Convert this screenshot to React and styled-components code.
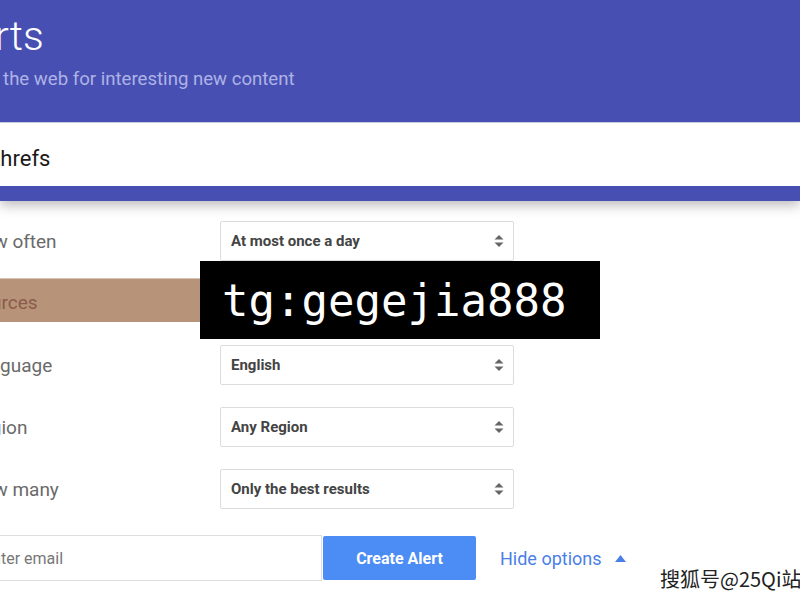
import React from 'react';
import styled, { createGlobalStyle } from 'styled-components';

const GlobalStyle = createGlobalStyle`
  html, body {
    margin: 0;
    padding: 0;
    background: #fff;
    font-family: Roboto, "Liberation Sans", sans-serif;
  }
`;

const Page = styled.div`
  position: relative;
  width: 800px;
  height: 600px;
  overflow: hidden;
  background: #fff;
`;

const Header = styled.header`
  position: relative;
  z-index: 2;
  background: #4750b2;
  padding: 15px 0 15px;
  box-shadow: 0 4px 12px rgba(0, 0, 0, 0.28);
`;

const Title = styled.h1`
  margin: 0 0 0 -61px;
  font-size: 41px;
  line-height: 42px;
  font-weight: 300;
  color: #fff;
  white-space: nowrap;
`;

const Subtitle = styled.p`
  margin: 10px 0 0 -66px;
  font-size: 18.6px;
  line-height: 24px;
  color: #aeb2e6;
  white-space: nowrap;
`;

const SearchBar = styled.div`
  margin-top: 31px;
  height: 64px;
  background: #fff;
  display: flex;
  align-items: center;
  padding-top: 7px;
  border-top: 1px solid #c9cbe6;
  box-sizing: border-box;
`;

const SearchText = styled.span`
  margin-left: -14px;
  font-size: 22px;
  color: #1a1a1a;
`;

const Options = styled.section`
  display: flex;
  flex-direction: column;
  gap: 22px;
  padding-top: 20px;
`;

const Row = styled.div`
  display: grid;
  grid-template-columns: 251px 294px;
  align-items: center;
  height: ${p => (p.$band ? '44px' : '40px')};
  width: ${p => (p.$band ? '560px' : 'auto')};
  margin: ${p => (p.$band ? '-5px 0 1px' : '0')};
  margin-left: -31px;
  padding-top: ${p => (p.$band ? '4px' : '0')};
  background: ${p => (p.$band ? '#b79479' : 'transparent')};
  border-top: ${p => (p.$band ? '1px solid #d8c3b2' : 'none')};
  box-sizing: border-box;
`;

const Label = styled.span`
  font-size: 19px;
  color: ${p => (p.$band ? '#8b5b4b' : '#6a6a6a')};
  white-space: nowrap;
`;

const Select = styled.div`
  height: 40px;
  box-sizing: border-box;
  border: 1px solid #dcdcdc;
  border-radius: 2px;
  background: #fff;
  display: flex;
  align-items: center;
  justify-content: space-between;
  padding: 0 8px 0 10px;
  font-size: 15px;
  font-weight: 700;
  color: #444;
`;

const Footer = styled.div`
  display: flex;
  align-items: center;
  margin-top: 26px;
`;

const EmailInput = styled.div`
  width: 353px;
  height: 46px;
  margin-left: -31px;
  box-sizing: border-box;
  border: 1px solid #dedede;
  display: flex;
  align-items: center;
  padding-left: 13px;
  font-size: 16px;
  color: #777;
`;

const Button = styled.button`
  width: 153px;
  height: 44px;
  margin-left: 1px;
  border: none;
  border-radius: 2px;
  background: #4b8cf5;
  color: #fff;
  font-family: Roboto, "Liberation Sans", sans-serif;
  font-size: 16px;
  font-weight: 700;
`;

const HideLink = styled.span`
  margin-left: 24px;
  display: flex;
  align-items: center;
  gap: 13px;
  font-size: 18px;
  color: #4a80e6;
`;

const Watermark = styled.div`
  position: absolute;
  left: 200px;
  top: 261px;
  width: 400px;
  height: 78px;
  z-index: 5;
  background: #000;
  color: #fff;
  display: flex;
  align-items: center;
  padding-left: 22px;
  box-sizing: border-box;
  font-family: "DejaVu Sans Mono", "Liberation Mono", monospace;
  font-size: 44px;
`;

const SiteMark = styled.div`
  position: absolute;
  left: 660px;
  top: 564px;
  z-index: 5;
  white-space: nowrap;
  font-family: "Noto Sans CJK SC", sans-serif;
  font-size: 20px;
  color: #222;
  text-shadow: 1px 1px 0 #fff, -1px -1px 0 #fff, 1px -1px 0 #fff, -1px 1px 0 #fff;
`;

const Arrows = () => (
  <svg width="12" height="14" viewBox="0 0 12 14">
    <path d="M1.5 5.5 L6 1 L10.5 5.5 Z" fill="#666" />
    <path d="M1.5 8.5 L6 13 L10.5 8.5 Z" fill="#666" />
  </svg>
);

const rows = [
  { label: 'How often', value: 'At most once a day' },
  { label: 'Sources', band: true },
  { label: 'Language', value: 'English' },
  { label: 'Region', value: 'Any Region' },
  { label: 'How many', value: 'Only the best results' },
];

export default function App() {
  return (
    <Page>
      <GlobalStyle />
      <Header>
        <Title>Alerts</Title>
        <Subtitle>Monitor the web for interesting new content</Subtitle>
        <SearchBar>
          <SearchText>Ahrefs</SearchText>
        </SearchBar>
      </Header>
      <Options>
        {rows.map(r => (
          <Row key={r.label} $band={r.band}>
            <Label $band={r.band}>{r.label}</Label>
            {r.value && (
              <Select>
                {r.value}
                <Arrows />
              </Select>
            )}
          </Row>
        ))}
      </Options>
      <Footer>
        <EmailInput>Enter email</EmailInput>
        <Button>Create Alert</Button>
        <HideLink>
          Hide options
          <svg width="11" height="7" viewBox="0 0 11 7">
            <path d="M0 7 L5.5 0 L11 7 Z" fill="#4a80e6" />
          </svg>
        </HideLink>
      </Footer>
      <Watermark>tg:gegejia888</Watermark>
      <SiteMark>搜狐号@25Qi站</SiteMark>
    </Page>
  );
}
